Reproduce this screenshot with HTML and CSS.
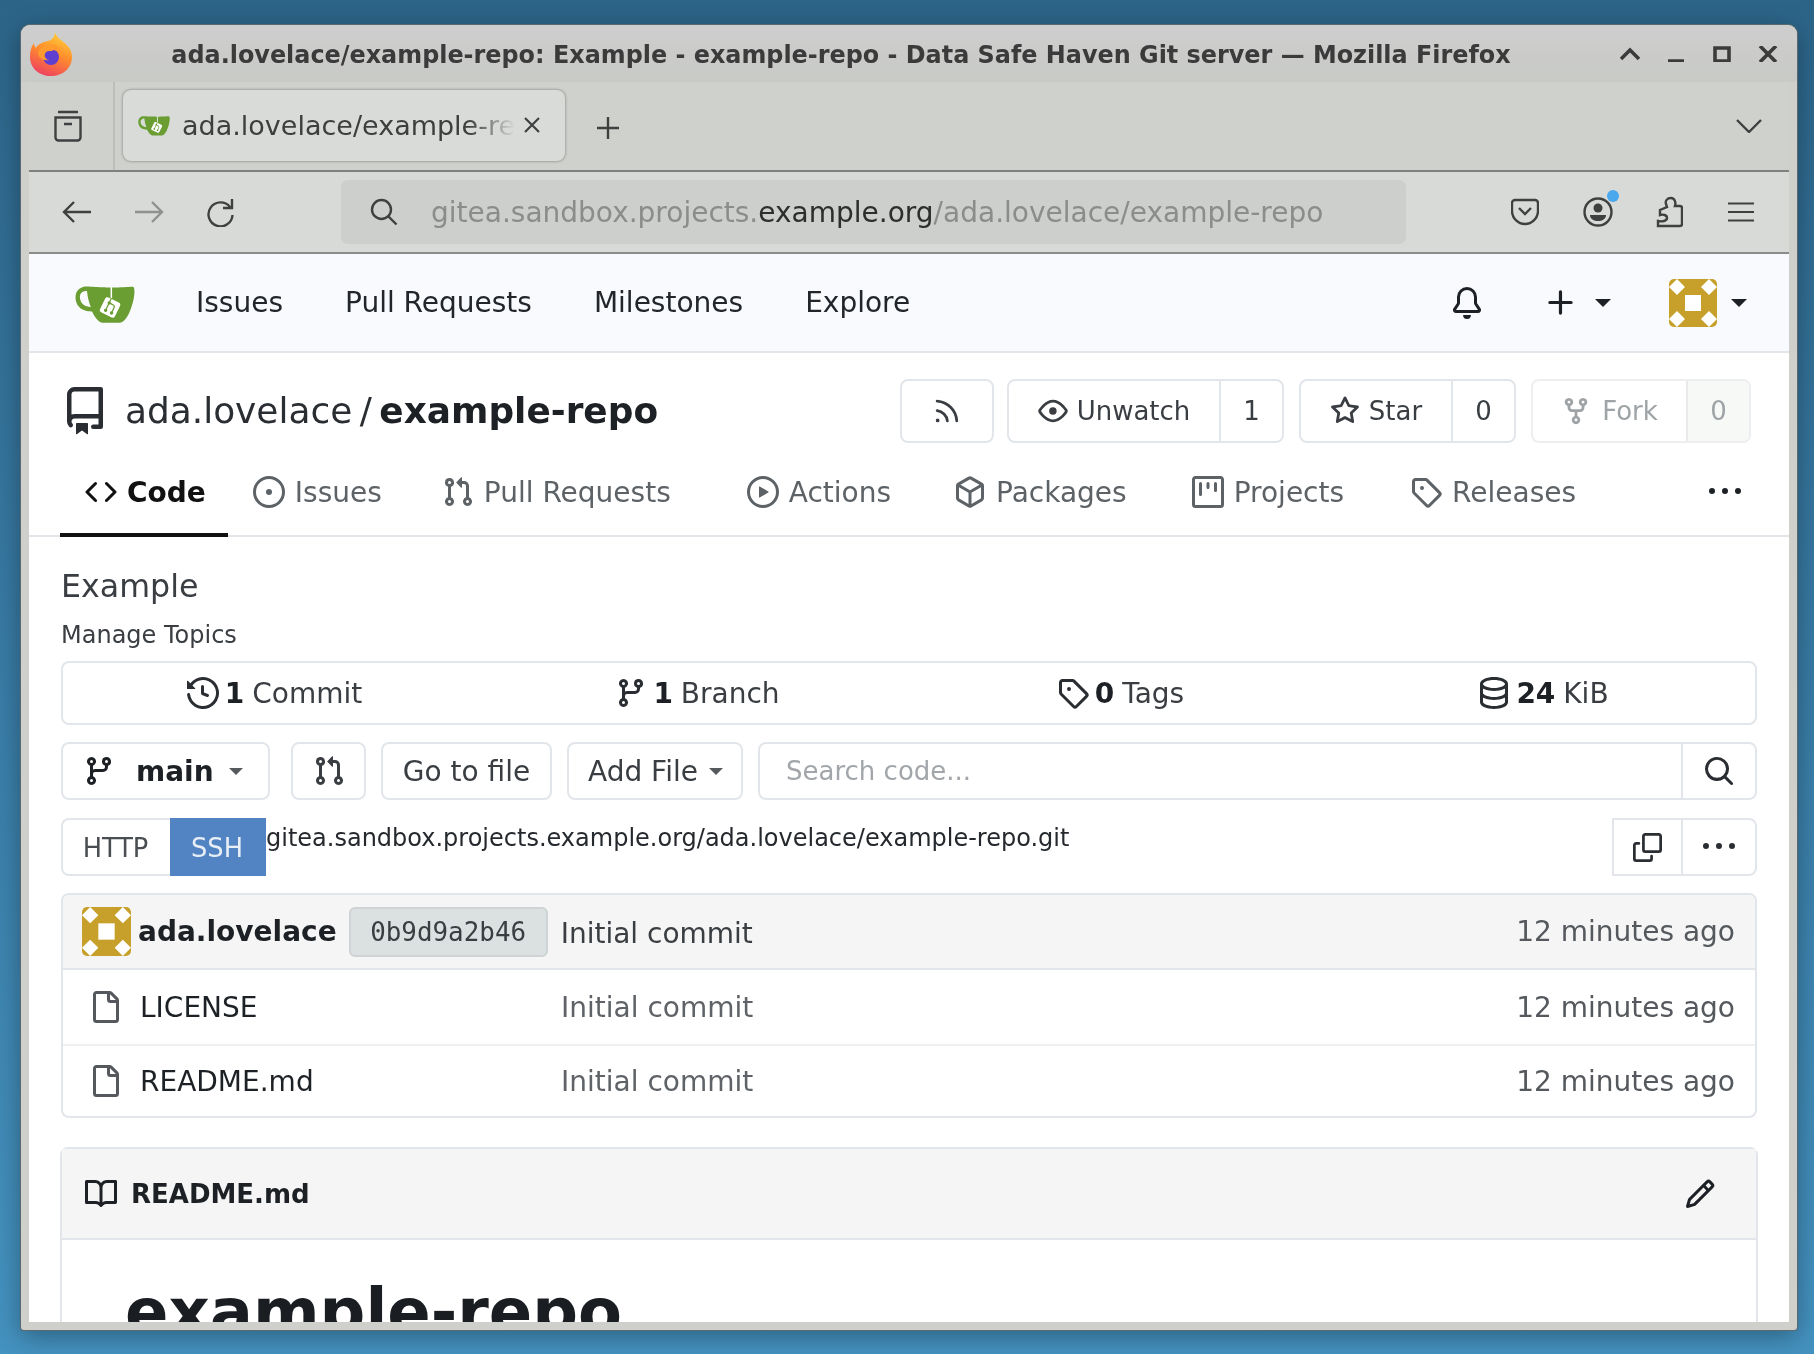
FILE: index.html
```html
<!DOCTYPE html>
<html lang="en">
<head>
<meta charset="utf-8">
<title>ada.lovelace/example-repo: Example - example-repo - Data Safe Haven Git server</title>
<link rel="stylesheet" href="styles.css">
</head>
<body>
<svg class="sprite" xmlns="http://www.w3.org/2000/svg">
  <symbol id="i-repo" viewBox="0 0 16 16"><path d="M2 2.5A2.5 2.5 0 0 1 4.5 0h8.75a.75.75 0 0 1 .75.75v12.5a.75.75 0 0 1-.75.75h-2.5a.75.75 0 0 1 0-1.5h1.75v-2h-8a1 1 0 0 0-.714 1.7.75.75 0 1 1-1.072 1.05A2.495 2.495 0 0 1 2 11.5Zm10.5-1h-8a1 1 0 0 0-1 1v6.708A2.486 2.486 0 0 1 4.5 9h8ZM5 12.25a.25.25 0 0 1 .25-.25h3.5a.25.25 0 0 1 .25.25v3.25a.25.25 0 0 1-.4.2l-1.45-1.087a.249.249 0 0 0-.3 0L5.4 15.7a.25.25 0 0 1-.4-.2Z"/></symbol>
  <symbol id="i-code" viewBox="0 0 16 16"><path d="m11.28 3.22 4.25 4.25a.75.75 0 0 1 0 1.06l-4.25 4.25a.749.749 0 0 1-1.275-.326.749.749 0 0 1 .215-.734L13.94 8l-3.72-3.72a.749.749 0 0 1 .326-1.275.749.749 0 0 1 .734.215Zm-6.56 0a.751.751 0 0 1 1.042.018.751.751 0 0 1 .018 1.042L2.06 8l3.72 3.72a.749.749 0 0 1-.326 1.275.749.749 0 0 1-.734-.215L.47 8.53a.75.75 0 0 1 0-1.06Z"/></symbol>
  <symbol id="i-issue" viewBox="0 0 16 16"><path d="M8 9.5a1.5 1.5 0 1 0 0-3 1.5 1.5 0 0 0 0 3Z"/><path d="M8 0a8 8 0 1 1 0 16A8 8 0 0 1 8 0ZM1.5 8a6.5 6.5 0 1 0 13 0 6.5 6.5 0 0 0-13 0Z"/></symbol>
  <symbol id="i-pr" viewBox="0 0 16 16"><path d="M1.5 3.25a2.25 2.25 0 1 1 3 2.122v5.256a2.251 2.251 0 1 1-1.5 0V5.372A2.25 2.25 0 0 1 1.5 3.25Zm5.677-.177L9.573.677A.25.25 0 0 1 10 .854V2.5h1A2.5 2.5 0 0 1 13.5 5v5.628a2.251 2.251 0 1 1-1.5 0V5a1 1 0 0 0-1-1h-1v1.646a.25.25 0 0 1-.427.177L7.177 3.427a.25.25 0 0 1 0-.354ZM3.75 2.5a.75.75 0 1 0 0 1.5.75.75 0 0 0 0-1.5Zm0 9.5a.75.75 0 1 0 0 1.5.75.75 0 0 0 0-1.5Zm8.25.75a.75.75 0 1 0 1.5 0 .75.75 0 0 0-1.5 0Z"/></symbol>
  <symbol id="i-play" viewBox="0 0 16 16"><path d="M8 0a8 8 0 1 1 0 16A8 8 0 0 1 8 0ZM1.5 8a6.5 6.5 0 1 0 13 0 6.5 6.5 0 0 0-13 0Zm4.879-2.773 4.264 2.559a.25.25 0 0 1 0 .428l-4.264 2.559A.25.25 0 0 1 6 10.559V5.442a.25.25 0 0 1 .379-.215Z"/></symbol>
  <symbol id="i-package" viewBox="0 0 16 16"><path d="m8.878.392 5.25 3.045c.54.314.872.89.872 1.514v6.098a1.75 1.75 0 0 1-.872 1.514l-5.25 3.045a1.75 1.75 0 0 1-1.756 0l-5.25-3.045A1.75 1.75 0 0 1 1 11.049V4.951c0-.624.332-1.201.872-1.514L7.122.392a1.75 1.75 0 0 1 1.756 0ZM7.875 1.69l-4.63 2.685L8 7.133l4.755-2.758-4.63-2.685a.248.248 0 0 0-.25 0ZM2.5 5.677v5.372c0 .09.047.171.125.216l4.625 2.683V8.432Zm6.25 8.271 4.625-2.683a.25.25 0 0 0 .125-.216V5.677L8.75 8.432Z"/></symbol>
  <symbol id="i-project" viewBox="0 0 16 16"><path d="M0 1.75C0 .784.784 0 1.75 0h12.5C15.216 0 16 .784 16 1.75v12.5A1.75 1.75 0 0 1 14.25 16H1.75A1.75 1.75 0 0 1 0 14.25ZM1.5 1.75v12.5c0 .138.112.25.25.25h12.5a.25.25 0 0 0 .25-.25V1.75a.25.25 0 0 0-.25-.25H1.75a.25.25 0 0 0-.25.25ZM11.75 3a.75.75 0 0 1 .75.75v3.5a.75.75 0 0 1-1.5 0v-3.5a.75.75 0 0 1 .75-.75Zm-8.25.75a.75.75 0 0 1 1.5 0v5.5a.75.75 0 0 1-1.5 0ZM8 3a.75.75 0 0 1 .75.75v2a.75.75 0 0 1-1.5 0v-2A.75.75 0 0 1 8 3Z"/></symbol>
  <symbol id="i-tag" viewBox="0 0 16 16"><path d="M1 7.775V2.75C1 1.784 1.784 1 2.75 1h5.025c.464 0 .91.184 1.238.513l6.25 6.25a1.75 1.75 0 0 1 0 2.474l-5.026 5.026a1.75 1.75 0 0 1-2.474 0l-6.25-6.25A1.752 1.752 0 0 1 1 7.775Zm1.5 0c0 .066.026.13.073.177l6.25 6.25a.25.25 0 0 0 .354 0l5.025-5.025a.25.25 0 0 0 0-.354l-6.25-6.25a.25.25 0 0 0-.177-.073H2.75a.25.25 0 0 0-.25.25ZM6 5a1 1 0 1 1 0 2 1 1 0 0 1 0-2Z"/></symbol>
  <symbol id="i-kebab" viewBox="0 0 16 16"><path d="M8 9a1.5 1.5 0 1 0 0-3 1.5 1.5 0 0 0 0 3ZM1.5 9a1.5 1.5 0 1 0 0-3 1.5 1.5 0 0 0 0 3Zm13 0a1.5 1.5 0 1 0 0-3 1.5 1.5 0 0 0 0 3Z"/></symbol>
  <symbol id="i-rss" viewBox="0 0 16 16"><path d="M2.002 2.725a.75.75 0 0 1 .797-.699C8.79 2.42 13.58 7.21 13.974 13.201a.75.75 0 0 1-1.497.098 10.502 10.502 0 0 0-9.776-9.776.747.747 0 0 1-.7-.798ZM2.84 7.05h-.002a7.002 7.002 0 0 1 6.113 6.111.75.75 0 0 1-1.49.178 5.503 5.503 0 0 0-4.8-4.8.75.75 0 0 1 .179-1.489ZM2 13a1 1 0 1 1 2 0 1 1 0 0 1-2 0Z"/></symbol>
  <symbol id="i-eye" viewBox="0 0 16 16"><path d="M8 2c1.981 0 3.671.992 4.933 2.078 1.27 1.091 2.187 2.345 2.637 3.023a1.62 1.62 0 0 1 0 1.798c-.45.678-1.367 1.932-2.637 3.023C11.67 13.008 9.981 14 8 14c-1.981 0-3.671-.992-4.933-2.078C1.797 10.83.88 9.576.43 8.898a1.62 1.62 0 0 1 0-1.798c.45-.677 1.367-1.931 2.637-3.022C4.33 2.992 6.019 2 8 2ZM1.679 7.932a.12.12 0 0 0 0 .136c.411.622 1.241 1.75 2.366 2.717C5.176 11.758 6.527 12.5 8 12.5c1.473 0 2.825-.742 3.955-1.715 1.124-.967 1.954-2.096 2.366-2.717a.12.12 0 0 0 0-.136c-.412-.621-1.242-1.75-2.366-2.717C10.824 4.242 9.473 3.5 8 3.5c-1.473 0-2.825.742-3.955 1.715-1.124.967-1.954 2.096-2.366 2.717ZM8 10a2 2 0 1 1-.001-3.999A2 2 0 0 1 8 10Z"/></symbol>
  <symbol id="i-star" viewBox="0 0 16 16"><path d="M8 .25a.75.75 0 0 1 .673.418l1.882 3.815 4.21.612a.75.75 0 0 1 .416 1.279l-3.046 2.97.719 4.192a.751.751 0 0 1-1.088.791L8 12.347l-3.766 1.98a.75.75 0 0 1-1.088-.79l.72-4.194L.818 6.374a.75.75 0 0 1 .416-1.28l4.21-.611L7.327.668A.75.75 0 0 1 8 .25Zm0 2.445L6.615 5.5a.75.75 0 0 1-.564.41l-3.097.45 2.24 2.184a.75.75 0 0 1 .216.664l-.528 3.084 2.769-1.456a.75.75 0 0 1 .698 0l2.77 1.456-.53-3.084a.75.75 0 0 1 .216-.664l2.24-2.183-3.096-.45a.75.75 0 0 1-.564-.41L8 2.694Z"/></symbol>
  <symbol id="i-fork" viewBox="0 0 16 16"><path d="M5 5.372v.878c0 .414.336.75.75.75h4.5a.75.75 0 0 0 .75-.75v-.878a2.25 2.25 0 1 1 1.5 0v.878a2.25 2.25 0 0 1-2.25 2.25h-1.5v2.128a2.251 2.251 0 1 1-1.5 0V8.5h-1.5A2.25 2.25 0 0 1 3.5 6.25v-.878a2.25 2.25 0 1 1 1.5 0ZM5 3.25a.75.75 0 1 0-1.5 0 .75.75 0 0 0 1.5 0Zm6.75.75a.75.75 0 1 0 0-1.5.75.75 0 0 0 0 1.5Zm-3 8.75a.75.75 0 1 0-1.5 0 .75.75 0 0 0 1.5 0Z"/></symbol>
  <symbol id="i-history" viewBox="0 0 16 16"><path d="m.427 1.927 1.215 1.215a8.002 8.002 0 1 1-1.6 5.685.75.75 0 1 1 1.493-.154 6.5 6.5 0 1 0 1.18-4.458l1.358 1.358A.25.25 0 0 1 3.896 6H.25A.25.25 0 0 1 0 5.75V2.104a.25.25 0 0 1 .427-.177ZM7.75 4a.75.75 0 0 1 .75.75v2.992l2.028.812a.75.75 0 0 1-.557 1.392l-2.5-1A.751.751 0 0 1 7 8.25v-3.5A.75.75 0 0 1 7.75 4Z"/></symbol>
  <symbol id="i-branch" viewBox="0 0 16 16"><path d="M9.5 3.25a2.25 2.25 0 1 1 3 2.122V6A2.5 2.5 0 0 1 10 8.5H6a1 1 0 0 0-1 1v1.128a2.251 2.251 0 1 1-1.5 0V5.372a2.25 2.25 0 1 1 1.5 0v1.836A2.493 2.493 0 0 1 6 7h4a1 1 0 0 0 1-1v-.628A2.25 2.25 0 0 1 9.5 3.25Zm-6 0a.75.75 0 1 0 1.5 0 .75.75 0 0 0-1.5 0Zm8.25-.75a.75.75 0 1 0 0 1.5.75.75 0 0 0 0-1.5ZM4.25 12a.75.75 0 1 0 0 1.5.75.75 0 0 0 0-1.5Z"/></symbol>
  <symbol id="i-db" viewBox="0 0 16 16"><path d="M1 3.5c0-.626.292-1.165.7-1.59.406-.422.956-.767 1.579-1.041C4.525.32 6.195 0 8 0c1.805 0 3.475.32 4.722.869.622.274 1.172.62 1.578 1.04.408.426.7.965.7 1.591v9c0 .626-.292 1.165-.7 1.59-.406.422-.956.767-1.579 1.041C11.476 15.68 9.806 16 8 16c-1.805 0-3.475-.32-4.721-.869-.623-.274-1.173-.62-1.579-1.04-.408-.426-.7-.965-.7-1.591Zm1.5 0c0 .133.058.318.282.551.227.237.591.483 1.101.707C4.898 5.205 6.353 5.5 8 5.5c1.646 0 3.101-.295 4.118-.742.508-.224.873-.471 1.1-.708.224-.232.282-.417.282-.55 0-.133-.058-.318-.282-.551-.227-.237-.591-.483-1.101-.707C11.102 1.795 9.647 1.5 8 1.5c-1.646 0-3.101.295-4.118.742-.508.224-.873.471-1.1.708-.224.232-.282.417-.282.55Zm0 4.5c0 .133.058.318.282.551.227.237.591.483 1.101.707C4.898 9.705 6.353 10 8 10c1.646 0 3.101-.295 4.118-.742.508-.224.873-.471 1.1-.708.224-.232.282-.417.282-.55V5.724c-.241.15-.503.286-.778.407C11.475 6.68 9.805 7 8 7c-1.805 0-3.475-.32-4.721-.869a6.15 6.15 0 0 1-.779-.407Zm0 2.225V12.5c0 .133.058.318.282.55.227.237.592.484 1.1.708 1.016.447 2.471.742 4.118.742 1.647 0 3.102-.295 4.117-.742.51-.224.874-.47 1.101-.707.224-.233.282-.418.282-.551v-2.275c-.241.15-.503.285-.778.406-1.247.549-2.917.869-4.722.869-1.805 0-3.475-.32-4.721-.869a6.327 6.327 0 0 1-.779-.406Z"/></symbol>
  <symbol id="i-search" viewBox="0 0 16 16"><path d="M10.68 11.74a6 6 0 0 1-7.922-8.982 6 6 0 0 1 8.982 7.922l3.04 3.04a.749.749 0 0 1-.326 1.275.749.749 0 0 1-.734-.215ZM11.5 7a4.499 4.499 0 1 0-8.997 0A4.499 4.499 0 0 0 11.5 7Z"/></symbol>
  <symbol id="i-copy" viewBox="0 0 16 16"><path d="M0 6.75C0 5.784.784 5 1.75 5h1.5a.75.75 0 0 1 0 1.5h-1.5a.25.25 0 0 0-.25.25v7.5c0 .138.112.25.25.25h7.5a.25.25 0 0 0 .25-.25v-1.5a.75.75 0 0 1 1.5 0v1.5A1.75 1.75 0 0 1 9.25 16h-7.5A1.75 1.75 0 0 1 0 14.25Z"/><path d="M5 1.75C5 .784 5.784 0 6.75 0h7.5C15.216 0 16 .784 16 1.75v7.5A1.75 1.75 0 0 1 14.25 11h-7.5A1.75 1.75 0 0 1 5 9.25Zm1.75-.25a.25.25 0 0 0-.25.25v7.5c0 .138.112.25.25.25h7.5a.25.25 0 0 0 .25-.25v-7.5a.25.25 0 0 0-.25-.25Z"/></symbol>
  <symbol id="i-file" viewBox="0 0 16 16"><path d="M2 1.75C2 .784 2.784 0 3.75 0h6.586c.464 0 .909.184 1.237.513l2.914 2.914c.329.328.513.773.513 1.237v9.586A1.75 1.75 0 0 1 13.25 16h-9.5A1.75 1.75 0 0 1 2 14.25Zm1.75-.25a.25.25 0 0 0-.25.25v12.5c0 .138.112.25.25.25h9.5a.25.25 0 0 0 .25-.25V6h-2.75A1.75 1.75 0 0 1 9 4.25V1.5Zm6.75.062V4.25c0 .138.112.25.25.25h2.688l-.011-.013-2.914-2.914-.013-.011Z"/></symbol>
  <symbol id="i-book" viewBox="0 0 16 16"><path d="M0 1.75A.75.75 0 0 1 .75 1h4.253c1.227 0 2.317.59 3 1.501A3.743 3.743 0 0 1 11.006 1h4.245a.75.75 0 0 1 .75.75v10.5a.75.75 0 0 1-.75.75h-4.507a2.25 2.25 0 0 0-1.591.659l-.622.621a.75.75 0 0 1-1.06 0l-.622-.621A2.25 2.25 0 0 0 5.258 13H.75a.75.75 0 0 1-.75-.75Zm7.251 10.324.004-5.073-.002-2.253A2.25 2.25 0 0 0 5.003 2.5H1.5v9h3.757a3.75 3.75 0 0 1 1.994.574ZM8.755 4.75l-.004 7.322a3.752 3.752 0 0 1 1.992-.572H14.5v-9h-3.495a2.25 2.25 0 0 0-2.25 2.25Z"/></symbol>
  <symbol id="i-pencil" viewBox="0 0 16 16"><path d="M11.013 1.427a1.75 1.75 0 0 1 2.474 0l1.086 1.086a1.75 1.75 0 0 1 0 2.474l-8.61 8.61c-.21.21-.47.364-.756.445l-3.251.93a.75.75 0 0 1-.927-.928l.929-3.25c.081-.286.235-.547.445-.758l8.61-8.61Zm.176 4.823L9.75 4.81l-6.286 6.287a.253.253 0 0 0-.064.108l-.558 1.953 1.953-.558a.253.253 0 0 0 .108-.064Zm1.238-3.763a.25.25 0 0 0-.354 0L10.811 3.75l1.439 1.44 1.263-1.263a.25.25 0 0 0 0-.354Z"/></symbol>
  <symbol id="i-bell" viewBox="0 0 16 16"><path d="M8 16a2 2 0 0 0 1.985-1.75c.017-.137-.097-.25-.235-.25h-3.5c-.138 0-.252.113-.235.25A2 2 0 0 0 8 16ZM3 5a5 5 0 0 1 10 0v2.947c0 .05.015.098.042.139l1.703 2.555A1.519 1.519 0 0 1 13.482 13H2.518a1.516 1.516 0 0 1-1.263-2.36l1.703-2.554A.255.255 0 0 0 3 7.947Zm5-3.5A3.5 3.5 0 0 0 4.5 5v2.947c0 .346-.102.683-.294.97l-1.703 2.556a.017.017 0 0 0-.003.01l.001.006c0 .002.002.004.004.006l.006.004.007.001h10.964l.007-.001.006-.004.004-.006.001-.007a.017.017 0 0 0-.003-.01l-1.703-2.554a1.745 1.745 0 0 1-.294-.97V5A3.5 3.5 0 0 0 8 1.5Z"/></symbol>
  <symbol id="i-plus" viewBox="0 0 16 16"><path d="M7.75 2a.75.75 0 0 1 .75.75V7h4.25a.75.75 0 0 1 0 1.5H8.5v4.25a.75.75 0 0 1-1.5 0V8.5H2.75a.75.75 0 0 1 0-1.5H7V2.75A.75.75 0 0 1 7.75 2Z"/></symbol>
  <symbol id="i-caret" viewBox="0 0 16 8"><path d="M0 0h16L8 8Z"/></symbol>
  <symbol id="i-gitea" viewBox="0 0 640 640">
    <path fill="#fff" d="m395.9 484.2-126.9-61c-12.5-6-17.9-21.2-11.8-33.8l61-126.9c6-12.5 21.2-17.9 33.8-11.8 17.2 8.3 27.1 13 27.1 13l-.1-109.2 16.7-.1.1 117.1s57.4 24.2 83.1 40.1c3.7 2.3 10.2 6.8 12.9 14.4 2.1 6.1 2 13.1-1 19.3l-61 126.9c-6.2 12.7-21.4 18.1-33.9 12"/>
    <path fill="#6a9e32" d="M622.7 149.8c-4.1-4.1-9.6-4-9.6-4s-117.2 6.6-177.9 8c-13.3.3-26.5.6-39.6.7v117.2c-5.5-2.6-11.1-5.3-16.6-7.9 0-36.4-.1-109.2-.1-109.2-29 .4-89.2-2.2-89.2-2.2s-141.4-7.1-156.8-8.5c-9.8-.6-22.5-2.1-39 1.5-8.7 1.8-33.5 7.4-53.8 26.9C-4.9 212.4 6.6 276.2 8 285.8c1.7 11.7 6.9 44.2 31.7 72.5 45.8 56.1 144.4 54.8 144.4 54.8s12.1 28.9 30.6 55.5c25 33.1 50.7 58.9 75.7 62 63 0 188.9-.1 188.9-.1s12 .1 28.3-10.3c14-8.5 26.5-23.4 26.5-23.4S547 483 565 451.5c5.5-9.7 10.1-19.1 14.1-28 0 0 55.2-117.1 55.2-231.1-1.1-34.5-9.6-40.6-11.6-42.6M125.6 353.9c-25.9-8.5-36.9-18.7-36.9-18.7S69.6 321.8 60 295.4c-16.5-44.2-1.4-71.2-1.4-71.2s8.4-22.5 38.5-30c13.8-3.7 31-3.1 31-3.1s7.1 59.4 15.7 94.2c7.2 29.2 24.8 77.7 24.8 77.7s-26.1-3.1-43-9.1m300.3 107.6s-6.1 14.5-19.6 15.4c-5.8.4-10.3-1.2-10.3-1.2s-.3-.1-5.3-2.1l-112.9-55s-10.9-5.7-12.8-15.6c-2.2-8.1 2.7-18.1 2.7-18.1L322 273s4.8-9.7 12.2-13c.6-.3 2.3-1 4.5-1.5 8.1-2.1 18 2.8 18 2.8L467.4 315s12.6 5.7 15.3 16.2c1.9 7.4-.5 14-1.8 17.2-6.3 15.4-55 113.1-55 113.1"/>
    <path fill="#6a9e32" d="M326.8 380.1c-8.2.1-15.4 5.8-17.3 13.8s2 16.3 9.1 20c7.7 4 17.5 1.8 22.7-5.4 5.1-7.1 4.3-16.9-1.8-23.1l24-49.1c1.5.1 3.7.2 6.2-.5 4.1-.9 7.1-3.6 7.1-3.6 4.2 1.8 8.6 3.8 13.2 6.1 4.8 2.4 9.3 4.9 13.4 7.3.9.5 1.8 1.1 2.8 1.9 1.6 1.3 3.4 3.1 4.7 5.5 1.9 5.5-1.9 14.9-1.9 14.9-2.3 7.6-18.4 40.6-18.4 40.6-8.1-.2-15.3 5-17.7 12.5-2.6 8.1 1.1 17.3 8.9 21.3s17.4 1.7 22.5-5.3c5-6.8 4.6-16.3-1.1-22.6 1.9-3.7 3.7-7.4 5.6-11.3 5-10.4 13.5-30.4 13.5-30.4.9-1.7 5.7-10.3 2.7-21.3-2.5-11.4-12.6-16.7-12.6-16.7-12.2-7.9-29.2-15.2-29.2-15.2s0-4.1-1.1-7.1c-1.1-3.1-2.8-5.1-3.9-6.3 4.7-9.7 9.4-19.3 14.1-29-4.1-2-8.1-4-12.2-6.1-4.8 9.8-9.7 19.7-14.5 29.5-6.7-.1-12.9 3.5-16.1 9.4-3.4 6.3-2.7 14.1 1.9 19.8z"/>
  </symbol>
  <symbol id="i-avatar" viewBox="0 0 48 48">
    <rect width="48" height="48" rx="5" fill="#c7a02b"/>
    <path fill="#fff" d="M8 0 16 8 8 16 0 8ZM40 0 48 8 40 16 32 8ZM8 32 16 40 8 48 0 40ZM40 32 48 40 40 48 32 40Z"/>
    <rect x="16" y="16" width="16" height="16" fill="#fff"/>
  </symbol>
</svg>

<div class="window">
  <header class="titlebar">
    <svg class="ff-logo" viewBox="0 0 42 44">
      <defs>
        <linearGradient id="ff-a" x1=".7" y1="0" x2=".3" y2="1"><stop offset="0" stop-color="#ffd23c"/><stop offset=".45" stop-color="#ff8f2c"/><stop offset="1" stop-color="#ee3f60"/></linearGradient>
      </defs>
      <path fill="url(#ff-a)" d="M25 0c1 3 2 5 6 8 7 5 11 10 11 17 0 11-9 19-21 19S0 36 0 25c0-6 1-10 4-14 0 2 1 4 2 5 2-4 7-6 12-7 4-1 7-4 7-9Z"/>
      <circle cx="21" cy="25" r="8" fill="#5f3fd0"/>
      <path fill="#ff9a2e" d="M8 20c3-7 11-9 17-7 5 2 8 7 7 13-1-5-4-7-8-8-2 1-3 1-5 1-3 0-5 3-4 6 1 2 2 3 4 3-6 1-11-2-11-8Z"/>
    </svg>
    <div class="win-title">ada.lovelace/example-repo: Example - example-repo - Data Safe Haven Git server — Mozilla Firefox</div>
    <div class="win-buttons">
      <svg class="win-btn" viewBox="0 0 20 16"><path d="M1 13 10 4l9 9"/></svg>
      <svg class="win-btn" viewBox="0 0 20 16"><path d="M2 15h16"/></svg>
      <svg class="win-btn" viewBox="0 0 20 16"><path d="M3 2h14v13H3Z"/></svg>
      <svg class="win-btn" viewBox="0 0 20 16"><path d="m2 0 16 16M18 0 2 16"/></svg>
    </div>
  </header>

  <div class="inner">
    <div class="tabbar">
      <div class="sidebar-btn">
        <svg class="ff-icon ff-side" viewBox="0 0 32 32"><path d="M6 2h20M3.500 7.500h25v20a3 3 0 0 1-3 3h-19a3 3 0 0 1-3-3ZM12 14h8"/></svg>
      </div>
      <div class="tab">
        <svg class="favicon"><use href="#i-gitea"/></svg>
        <span class="tab-title">ada.lovelace/example-repo: Example</span>
        <svg class="tab-close" viewBox="0 0 18 18"><path d="m2 2 14 14M16 2 2 16"/></svg>
      </div>
      <svg class="ff-icon new-tab" viewBox="0 0 24 24"><path d="M12 1v22M1 12h22"/></svg>
      <svg class="ff-icon all-tabs" viewBox="0 0 26 14"><path d="m1 1 12 12L25 1"/></svg>
    </div>

    <div class="toolbar">
      <svg class="ff-icon back" viewBox="0 0 30 22"><path d="M29 11H2M12 1 2 11l10 10"/></svg>
      <svg class="ff-icon forward" viewBox="0 0 30 22"><path d="M1 11h27M18 1l10 10-10 10"/></svg>
      <svg class="ff-icon reload" viewBox="0 0 30 30"><path d="M25 10a12 12 0 1 0 2.500 8M27 2v9h-9"/></svg>
      <div class="urlbar">
        <svg class="ff-icon url-search" viewBox="0 0 28 28"><circle cx="11.500" cy="11.500" r="9.500"/><path d="m18.500 18.500 8 8"/></svg>
        <div class="url"><span class="url-dim">gitea.sandbox.projects.</span><span class="url-host">example.org</span><span class="url-dim">/ada.lovelace/example-repo</span></div>
      </div>
      <svg class="ff-icon pocket" viewBox="0 0 28 28"><path d="M4 2h20a3 3 0 0 1 3 3v8c0 7-6 13-13 13S1 20 1 13V5a3 3 0 0 1 3-3ZM8 10l6 6 6-6"/></svg>
      <div class="account">
        <svg class="ff-icon account-icon" viewBox="0 0 30 30"><circle cx="15" cy="15" r="13.500"/><circle cx="15" cy="11" r="4.500" class="solid"/><path class="solid" d="M7 18h16c0 4-4 6-8 6s-8-2-8-6Z"/></svg>
        <span class="account-dot"></span>
      </div>
      <svg class="ff-icon extension" viewBox="0 0 28 32"><path d="M3 30h22a2 2 0 0 0 2-2V12a2 2 0 0 0-2-2h-5c1-3 0-8-4-8s-6 3-5 6l1 3-7 3v5c3-1 7 0 7 3s-5 4-9 3v5a2 2 0 0 0 0 0Z"/></svg>
      <svg class="ff-icon menu" viewBox="0 0 26 20"><path d="M0 1.500h26M0 10h26M0 18.500h26"/></svg>
    </div>

    <main class="page">
      <nav class="topnav">
        <svg class="logo"><use href="#i-gitea"/></svg>
        <a class="nav-link">Issues</a>
        <a class="nav-link">Pull Requests</a>
        <a class="nav-link">Milestones</a>
        <a class="nav-link">Explore</a>
        <div class="nav-right">
          <svg class="ic nav-bell"><use href="#i-bell"/></svg>
          <svg class="ic nav-plus"><use href="#i-plus"/></svg>
          <svg class="caret-nav"><use href="#i-caret"/></svg>
          <svg class="nav-avatar"><use href="#i-avatar"/></svg>
          <svg class="caret-nav"><use href="#i-caret"/></svg>
        </div>
      </nav>

      <section class="repo-head">
        <svg class="ic repo-icon"><use href="#i-repo"/></svg>
        <h1 class="repo-title"><span class="owner">ada.lovelace</span><span class="slash">/</span><strong>example-repo</strong></h1>
        <div class="repo-actions">
          <div class="act act-rss"><svg class="ic act-ic"><use href="#i-rss"/></svg></div>
          <div class="act act-pair">
            <div class="act-main act-watch"><svg class="ic act-ic"><use href="#i-eye"/></svg>Unwatch</div>
            <div class="act-count">1</div>
          </div>
          <div class="act act-pair">
            <div class="act-main act-star"><svg class="ic act-ic"><use href="#i-star"/></svg>Star</div>
            <div class="act-count">0</div>
          </div>
          <div class="act act-pair act-off">
            <div class="act-main act-fork"><svg class="ic act-ic"><use href="#i-fork"/></svg>Fork</div>
            <div class="act-count">0</div>
          </div>
        </div>
      </section>

      <div class="repo-tabs">
        <a class="rtab rtab-on"><svg class="ic"><use href="#i-code"/></svg>Code</a>
        <a class="rtab"><svg class="ic"><use href="#i-issue"/></svg>Issues</a>
        <a class="rtab"><svg class="ic"><use href="#i-pr"/></svg>Pull Requests</a>
        <a class="rtab"><svg class="ic"><use href="#i-play"/></svg>Actions</a>
        <a class="rtab"><svg class="ic"><use href="#i-package"/></svg>Packages</a>
        <a class="rtab"><svg class="ic"><use href="#i-project"/></svg>Projects</a>
        <a class="rtab"><svg class="ic"><use href="#i-tag"/></svg>Releases</a>
        <svg class="ic rtab-more"><use href="#i-kebab"/></svg>
      </div>

      <div class="content">
        <p class="desc">Example</p>
        <p class="topics">Manage Topics</p>

        <div class="stats">
          <div class="stat"><svg class="ic"><use href="#i-history"/></svg><b>1</b> Commit</div>
          <div class="stat"><svg class="ic"><use href="#i-branch"/></svg><b>1</b> Branch</div>
          <div class="stat"><svg class="ic"><use href="#i-tag"/></svg><b>0</b> Tags</div>
          <div class="stat"><svg class="ic"><use href="#i-db"/></svg><b>24</b> KiB</div>
        </div>

        <div class="tools">
          <div class="btn btn-branch"><svg class="ic"><use href="#i-branch"/></svg><b>main</b><svg class="caret-sm"><use href="#i-caret"/></svg></div>
          <div class="btn btn-pr"><svg class="ic"><use href="#i-pr"/></svg></div>
          <div class="btn btn-go">Go to file</div>
          <div class="btn btn-add">Add File<svg class="caret-sm"><use href="#i-caret"/></svg></div>
          <div class="search">
            <div class="search-input">Search code...</div>
            <div class="search-btn"><svg class="ic"><use href="#i-search"/></svg></div>
          </div>
        </div>

        <div class="clone">
          <div class="clone-proto clone-http">HTTP</div>
          <div class="clone-proto clone-ssh">SSH</div>
          <div class="clone-url">gitea.sandbox.projects.example.org/ada.lovelace/example-repo.git</div>
          <div class="clone-btns">
            <div class="clone-btn"><svg class="ic"><use href="#i-copy"/></svg></div>
            <div class="clone-btn clone-btn-more"><svg class="ic"><use href="#i-kebab"/></svg></div>
          </div>
        </div>

        <div class="files">
          <div class="row row-head">
            <svg class="row-avatar"><use href="#i-avatar"/></svg>
            <b class="author">ada.lovelace</b>
            <span class="sha">0b9d9a2b46</span>
            <span class="head-msg">Initial commit</span>
            <span class="age">12 minutes ago</span>
          </div>
          <div class="row">
            <div class="name"><svg class="ic file-ic"><use href="#i-file"/></svg>LICENSE</div>
            <span class="msg">Initial commit</span>
            <span class="age">12 minutes ago</span>
          </div>
          <div class="row">
            <div class="name"><svg class="ic file-ic"><use href="#i-file"/></svg>README.md</div>
            <span class="msg">Initial commit</span>
            <span class="age">12 minutes ago</span>
          </div>
        </div>

        <div class="readme">
          <div class="readme-head">
            <svg class="ic book"><use href="#i-book"/></svg>
            <b>README.md</b>
            <svg class="ic pencil"><use href="#i-pencil"/></svg>
          </div>
          <div class="readme-body"><h2>example-repo</h2></div>
        </div>
      </div>
    </main>
  </div>
</div>
</body>
</html>
```
FILE: styles.css
```css
* { box-sizing: border-box; }
html, body { margin: 0; height: 100%; }
body {
  height: 1354px;
  overflow: hidden;
  padding: 25px 0 0 21px;
  background: linear-gradient(180deg, #2c6488 0%, #3a7ea8 55%, #4492c0 100%);
  font-family: "DejaVu Sans", sans-serif;
  font-size: 28px;
  color: #1d2125;
}
.sprite { display: none; }
.ic { width: 32px; height: 32px; fill: currentColor; flex: none; display: block; }
p, h1, h2 { margin: 0; font-weight: normal; }

/* Window */
.window {
  width: 1776px;
  height: 1305px;
  display: flex;
  flex-direction: column;
  background: #cfd0cc;
  border-radius: 9px 9px 3px 3px;
  box-shadow: 0 0 0 1px #5a6a70, 0 6px 26px rgba(0, 0, 0, .35);
  overflow: hidden;
  filter: blur(.6px);
}
.titlebar {
  height: 57px;
  flex: none;
  display: flex;
  align-items: center;
  background: linear-gradient(180deg, #cecece, #c8cac6);
  padding-left: 9px;
}
.ff-logo { width: 42px; height: 44px; flex: none; }
.win-title {
  margin-left: 98px;
  width: 1342px;
  padding-top: 2px;
  white-space: nowrap;
  font-weight: 700;
  font-size: 23.9px;
  color: #3b3b3b;
  text-align: center;
}
.win-buttons { margin-left: 108px; display: flex; gap: 26px; }
.win-btn { width: 20px; height: 16px; fill: none; stroke: #3b3b3b; stroke-width: 3.6; flex: none; }
.inner {
  flex: 1;
  min-height: 0;
  margin: 0 8px 8px;
  display: flex;
  flex-direction: column;
}

/* Firefox chrome */
.ff-icon { fill: none; stroke: #3f4140; stroke-width: 2.400; display: block; flex: none; }
.tabbar {
  height: 90px;
  flex: none;
  display: flex;
  align-items: center;
  background: #cfd1cd;
  border-bottom: 2px solid #7f817f;
}
.sidebar-btn {
  width: 86px;
  height: 100%;
  flex: none;
  display: flex;
  align-items: center;
  justify-content: center;
  padding-right: 6px;
  border-right: 2px solid #bcbebb;
}
.ff-side { width: 32px; height: 32px; }
.tab {
  margin: 0 0 2px 8px;
  width: 442px;
  height: 71px;
  flex: none;
  display: flex;
  align-items: center;
  padding-left: 15px;
  background: #d9dbd8;
  border-radius: 8px;
  box-shadow: 0 0 3px rgba(0, 0, 0, .45);
}
.favicon { width: 32px; height: 32px; flex: none; }
.tab-title {
  margin-left: 12px;
  width: 333px;
  flex: none;
  overflow: hidden;
  white-space: nowrap;
  font-size: 27px;
  color: #3d3f3e;
  -webkit-mask-image: linear-gradient(90deg, #000 86%, transparent 100%);
  mask-image: linear-gradient(90deg, #000 86%, transparent 100%);
}
.tab-close { width: 18px; height: 18px; margin-left: 8px; fill: none; stroke: #3f4140; stroke-width: 2.200; flex: none; }
.new-tab { width: 24px; height: 24px; margin: 3px 0 0 31px; }
.all-tabs { width: 26px; height: 14px; margin: 0 27px 0 auto; }

.toolbar {
  height: 82px;
  flex: none;
  display: flex;
  align-items: center;
  background: #d8dad7;
  border-bottom: 2px solid #8a8c8a;
}
.back { width: 30px; height: 22px; margin-left: 33px; }
.forward { width: 30px; height: 22px; margin-left: 42px; stroke: #8f918f; }
.reload { width: 30px; height: 30px; margin-left: 41px; }
.urlbar {
  margin-left: 106px;
  width: 1065px;
  height: 64px;
  flex: none;
  display: flex;
  align-items: center;
  background: #cdcfcc;
  border-radius: 7px;
  padding-left: 29px;
}
.url-search { width: 28px; height: 28px; }
.url { margin-left: 33px; font-size: 28px; white-space: nowrap; }
.url-dim { color: #8b8d8b; }
.url-host { color: #2d2f2e; }
.pocket { width: 28px; height: 28px; margin-left: 105px; }
.account { position: relative; margin-left: 44px; flex: none; }
.account-icon { width: 30px; height: 30px; }
.account-icon .solid { fill: #3f4140; stroke: none; }
.account-dot {
  position: absolute;
  top: -7px;
  right: -6px;
  width: 12px;
  height: 12px;
  border-radius: 50%;
  background: #4aa8ec;
}
.extension { width: 28px; height: 32px; margin-left: 42px; }
.menu { width: 26px; height: 20px; margin-left: 45px; stroke-width: 2; }

/* Page */
.page { flex: 1; min-height: 0; background: #fff; overflow: hidden; }
.topnav {
  height: 99px;
  display: flex;
  align-items: center;
  padding-left: 46px;
  background: #f8fafd;
  border-bottom: 2px solid #e2e6ea;
}
.logo { width: 60px; height: 60px; flex: none; }
.nav-link { margin-left: 62px; color: #22262a; }
.logo + .nav-link { margin-left: 61px; }
.nav-right { margin-left: auto; display: flex; align-items: center; padding-right: 42px; }
.nav-bell { width: 32px; height: 32px; }
.nav-plus { width: 34px; height: 34px; margin-left: 61px; }
.caret-nav { width: 16px; height: 8px; fill: #1d2125; margin-left: 17px; flex: none; }
.nav-avatar { width: 48px; height: 48px; margin-left: 58px; flex: none; }
.nav-avatar + .caret-nav { margin-left: 14px; }

.repo-head {
  display: flex;
  align-items: center;
  padding: 26px 38px 0 32px;
  height: 90px;
}
.repo-icon { width: 48px; height: 48px; color: #2a2e32; }
.repo-title { margin-left: 16px; font-size: 35.9px; line-height: 48px; white-space: nowrap; color: #2a2e32; }
.slash { margin: 0 7.5px; }
.repo-title strong { font-weight: 700; color: #1d2125; }
.repo-actions { margin-left: auto; display: flex; gap: 15px; }
.act {
  height: 64px;
  display: flex;
  align-items: center;
  border: 2px solid #e2e6ea;
  border-radius: 8px;
  font-size: 26px;
  color: #3a3e42;
}
.act-ic { width: 30px; height: 30px; }
.act-rss { width: 94px; margin-right: -2px; justify-content: center; }
.act-pair { overflow: hidden; }
.act-main { display: flex; align-items: center; justify-content: center; gap: 9px; height: 100%; }
.act-watch { width: 210px; }
.act-star { width: 150px; }
.act-fork { width: 153px; gap: 11px; }
.act-count {
  width: 63px;
  height: 100%;
  display: flex;
  align-items: center;
  justify-content: center;
  border-left: 2px solid #e2e6ea;
}
.act-off { color: #9ea3a6; border-color: #eceef0; }
.act-off .act-count { background: #f7f9f6; border-left-color: #e8eae8; }

.repo-tabs {
  height: 94px;
  display: flex;
  align-items: flex-end;
  padding: 0 48px 0 31px;
  border-bottom: 2px solid #e2e6ea;
  color: #5d6266;
}
.rtab {
  height: 68px;
  display: flex;
  align-items: center;
  gap: 10px;
  padding: 0 24px 18px 25px;
  white-space: nowrap;
  margin-bottom: -2px;
  border-bottom: 4px solid transparent;
}
.rtab .ic { color: #5d6266; }
.rtab-on { color: #111; font-weight: 700; border-bottom-color: #111; padding-right: 22px; }
.rtab-on .ic { color: #111; }
.rtab:nth-child(2) { margin-left: 0; }
.rtab:nth-child(3) { margin-left: 11px; }
.rtab:nth-child(4) { margin-left: 27px; }
.rtab:nth-child(5) { margin-left: 14px; }
.rtab:nth-child(6) { margin-left: 16px; }
.rtab:nth-child(7) { margin-left: 17px; }
.rtab-more { margin: 0 0 27px auto; color: #1d2125; }

.content { padding: 0 32px; }
.desc { margin-top: 29px; font-size: 31.7px; line-height: 40px; color: #3a3e42; }
.topics { margin-top: 14px; font-size: 24px; line-height: 30px; color: #3a3e42; }

.stats {
  margin-top: 11px;
  height: 64px;
  display: flex;
  align-items: center;
  border: 2px solid #e2e6ea;
  border-radius: 8px;
  color: #3a3e42;
}
.stat { flex: 1; display: flex; align-items: center; justify-content: center; white-space: pre; }
.stat .ic { margin-right: 6px; color: #2a2e32; }
.stat b { margin-right: -1px; color: #1d2125; }

.tools { margin-top: 17px; height: 58px; display: flex; }
.btn {
  height: 100%;
  display: flex;
  align-items: center;
  border: 2px solid #e2e6ea;
  border-radius: 8px;
  color: #3a3e42;
  flex: none;
}
.btn-branch { width: 209px; padding-left: 20px; color: #1d2125; }
.btn-branch b { margin-left: 21px; }
.caret-sm { width: 14px; height: 7px; fill: #555a5e; flex: none; margin-left: 15px; }
.btn-pr { width: 75px; margin-left: 21px; justify-content: center; }
.btn-go { width: 171px; margin-left: 15px; justify-content: center; }
.btn-add { width: 176px; margin-left: 15px; padding-left: 19px; }
.btn-add .caret-sm { margin-left: 11px; }
.search {
  flex: 1;
  margin-left: 15px;
  display: flex;
  border: 2px solid #e2e6ea;
  border-radius: 8px;
}
.search-input { flex: 1; display: flex; align-items: center; padding-left: 26px; font-size: 26px; color: #a2a6aa; }
.search-btn { width: 74px; display: flex; align-items: center; justify-content: center; border-left: 2px solid #e2e6ea; color: #2a2e32; }

.clone { margin-top: 18px; height: 58px; display: flex; }
.clone-proto {
  display: flex;
  align-items: center;
  justify-content: center;
  font-size: 25.7px;
  padding-top: 2px;
  flex: none;
}
.clone-http {
  width: 109px;
  padding-right: 2px;
  border: 2px solid #e2e6ea;
  border-right: 0;
  border-radius: 8px 0 0 8px;
  color: #4a4e52;
}
.clone-ssh { width: 96px; padding-right: 2px; background: #5284c4; color: #e8eef6; }
.clone-url { flex: 1; font-size: 24px; line-height: 40px; color: #25292d; }
.clone-btns {
  display: flex;
  flex: none;
  border: 2px solid #e2e6ea;
  border-radius: 0 8px 8px 0;
}
.clone-btn { width: 67px; display: flex; align-items: center; justify-content: center; color: #2a2e32; }
.clone-btn .ic { width: 29px; height: 29px; }
.clone-btn-more { width: 74px; border-left: 2px solid #e2e6ea; }
.clone-btn-more .ic { width: 32px; height: 32px; }

.files { margin-top: 17px; border: 2px solid #e2e6ea; border-radius: 8px; overflow: hidden; }
.row { height: 72px; display: flex; align-items: center; padding-right: 20px; border-top: 2px solid #eef0f2; color: #1d2125; }
.row-head {
  height: 75px;
  border-top: 0;
  background: #f5f5f5;
  padding-left: 19px;
  border-bottom: 2px solid #e2e6ea;
}
.row-head + .row { border-top: 0; height: 74px; }
.row-avatar { width: 49px; height: 49px; flex: none; }
.author { margin-left: 7px; }
.sha {
  margin-left: 12px;
  width: 199px;
  height: 50px;
  flex: none;
  display: flex;
  align-items: center;
  justify-content: center;
  background: #dbe0e1;
  border: 2px solid #ced3d5;
  border-radius: 6px;
  font-family: "DejaVu Sans Mono", monospace;
  font-size: 25.9px;
  color: #3a3e42;
}
.head-msg { margin-left: 13px; padding-top: 3px; color: #3a3e42; }
.name { width: 498px; display: flex; align-items: center; gap: 19px; padding-left: 26px; flex: none; white-space: nowrap; }
.file-ic { color: #55595d; }
.msg { color: #5f6367; }
.age { margin-left: auto; color: #55595d; }

.readme { margin: 29px -1px 0; border: 2px solid #e2e6ea; border-radius: 8px 8px 0 0; }
.readme-head {
  height: 91px;
  display: flex;
  align-items: center;
  padding-left: 23px;
  background: #f5f5f5;
  border-bottom: 2px solid #e2e6ea;
  font-size: 26px;
}
.book { margin-right: 14px; }
.pencil { margin-left: auto; margin-right: 40px; width: 32px; height: 32px; }
.readme-body { padding: 36px 63px 40px; }
.readme-body h2 { font-size: 64px; line-height: 72px; font-weight: 700; color: #1a1e22; }
```
